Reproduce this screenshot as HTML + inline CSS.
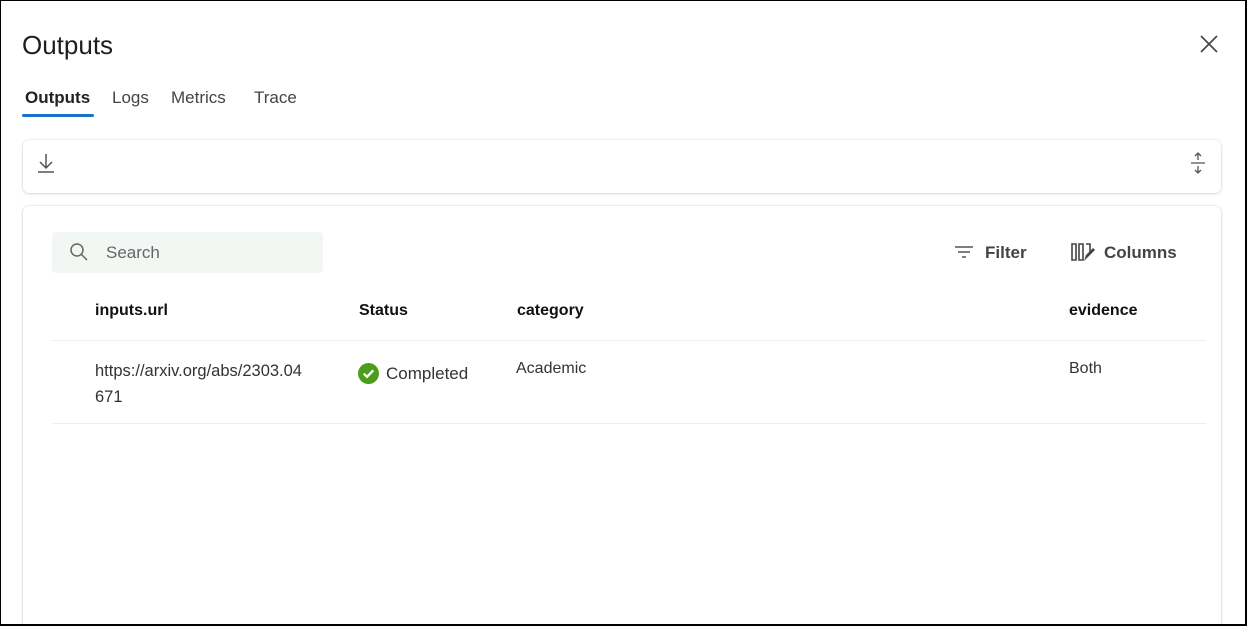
<!DOCTYPE html>
<html><head><meta charset="utf-8"><style>
*{margin:0;padding:0;box-sizing:border-box}
html,body{width:1247px;height:626px;overflow:hidden}
body{background:#fff;font-family:"Liberation Sans",sans-serif;color:#242424;position:relative}
.frame{position:absolute;left:0;top:0;width:1247px;height:626px;border:1px solid #000;border-right-width:2px;border-bottom-width:2px;pointer-events:none;z-index:10}
.a{position:absolute;white-space:nowrap}
.card{position:absolute;background:#fff;border-radius:6px;box-shadow:0 0 2px rgba(0,0,0,.14),0 1px 3px rgba(0,0,0,.12)}
.th{font-weight:bold;font-size:16px;color:#111}
.td{font-size:16px;color:#333}
</style></head><body>
<div class="frame"></div>
<div class="a" style="left:22px;top:30px;font-size:26px;color:#1e1e1e">Outputs</div>
<svg class="a" style="left:1199px;top:34px" width="20" height="20" viewBox="0 0 20 20"><path d="M2 2L18 18M18 2L2 18" stroke="#444" stroke-width="1.6"/></svg>
<div class="a" style="left:25px;top:88px;font-size:17px;font-weight:bold;color:#222">Outputs</div>
<div class="a" style="left:22px;top:114px;width:72px;height:3px;background:#1a73c8;border-radius:2px"></div>
<div class="a" style="left:112px;top:88px;font-size:17px;color:#444">Logs</div>
<div class="a" style="left:171px;top:88px;font-size:17px;color:#444">Metrics</div>
<div class="a" style="left:254px;top:88px;font-size:17px;color:#444">Trace</div>
<div class="card" style="left:23px;top:140px;width:1198px;height:53px"></div>
<svg class="a" style="left:37px;top:152px" width="18" height="22" viewBox="0 0 18 22"><path d="M9 2V16M3 10L9 16L15 10M1 20H17" stroke="#555" stroke-width="1.5" fill="none"/></svg>
<svg class="a" style="left:1189px;top:151px" width="18" height="24" viewBox="0 0 18 24"><path d="M9 2V9M6 5L9 2L12 5M2 12H16M9 15V22M6 19L9 22L12 19" stroke="#555" stroke-width="1.3" fill="none"/></svg>
<div class="card" style="left:23px;top:206px;width:1198px;height:430px"></div>
<div class="a" style="left:52px;top:232px;width:271px;height:41px;background:#f3f7f4;border-radius:4px"></div>
<svg class="a" style="left:69px;top:242px" width="20" height="20" viewBox="0 0 20 20"><circle cx="8" cy="8" r="6" stroke="#666" stroke-width="1.5" fill="none"/><path d="M12.5 12.5L18 18" stroke="#666" stroke-width="1.5"/></svg>
<div class="a" style="left:106px;top:243px;font-size:17px;color:#666">Search</div>
<svg class="a" style="left:954px;top:244px" width="20" height="16" viewBox="0 0 20 16"><path d="M1 3H19M4 8H16M8 13H12" stroke="#555" stroke-width="1.6"/></svg>
<div class="a" style="left:985px;top:243px;font-size:17px;font-weight:bold;color:#444">Filter</div>
<svg class="a" style="left:1070px;top:241px" width="26" height="22" viewBox="0 0 26 22"><path d="M2 3h4v16H2zM9 3h4v16H9zM16 3h4v8" stroke="#444" stroke-width="1.6" fill="none"/><path d="M14 20l2-6 7-7 2 2-7 7z" fill="#444"/></svg>
<div class="a" style="left:1104px;top:243px;font-size:17px;font-weight:bold;color:#444">Columns</div>
<div class="a th" style="left:95px;top:302px">inputs.url</div>
<div class="a th" style="left:359px;top:302px">Status</div>
<div class="a th" style="left:517px;top:302px">category</div>
<div class="a th" style="left:1069px;top:302px">evidence</div>
<div class="a" style="left:52px;top:340px;width:1154px;height:1px;background:#eee"></div>
<div class="a td" style="left:95px;top:358px;line-height:26px;font-size:16.5px">https://arxiv.org/abs/2303.04<br>671</div>
<svg class="a" style="left:358px;top:363px" width="21" height="21" viewBox="0 0 20 20"><circle cx="10" cy="10" r="10" fill="#4a9e1c"/><path d="M5.5 10.2L8.6 13.2L14.5 7" stroke="#fff" stroke-width="2.2" fill="none"/></svg>
<div class="a td" style="left:386px;top:364px;font-size:17px">Completed</div>
<div class="a td" style="left:516px;top:360px">Academic</div>
<div class="a td" style="left:1069px;top:360px">Both</div>
<div class="a" style="left:52px;top:423px;width:1154px;height:1px;background:#eee"></div>
</body></html>
